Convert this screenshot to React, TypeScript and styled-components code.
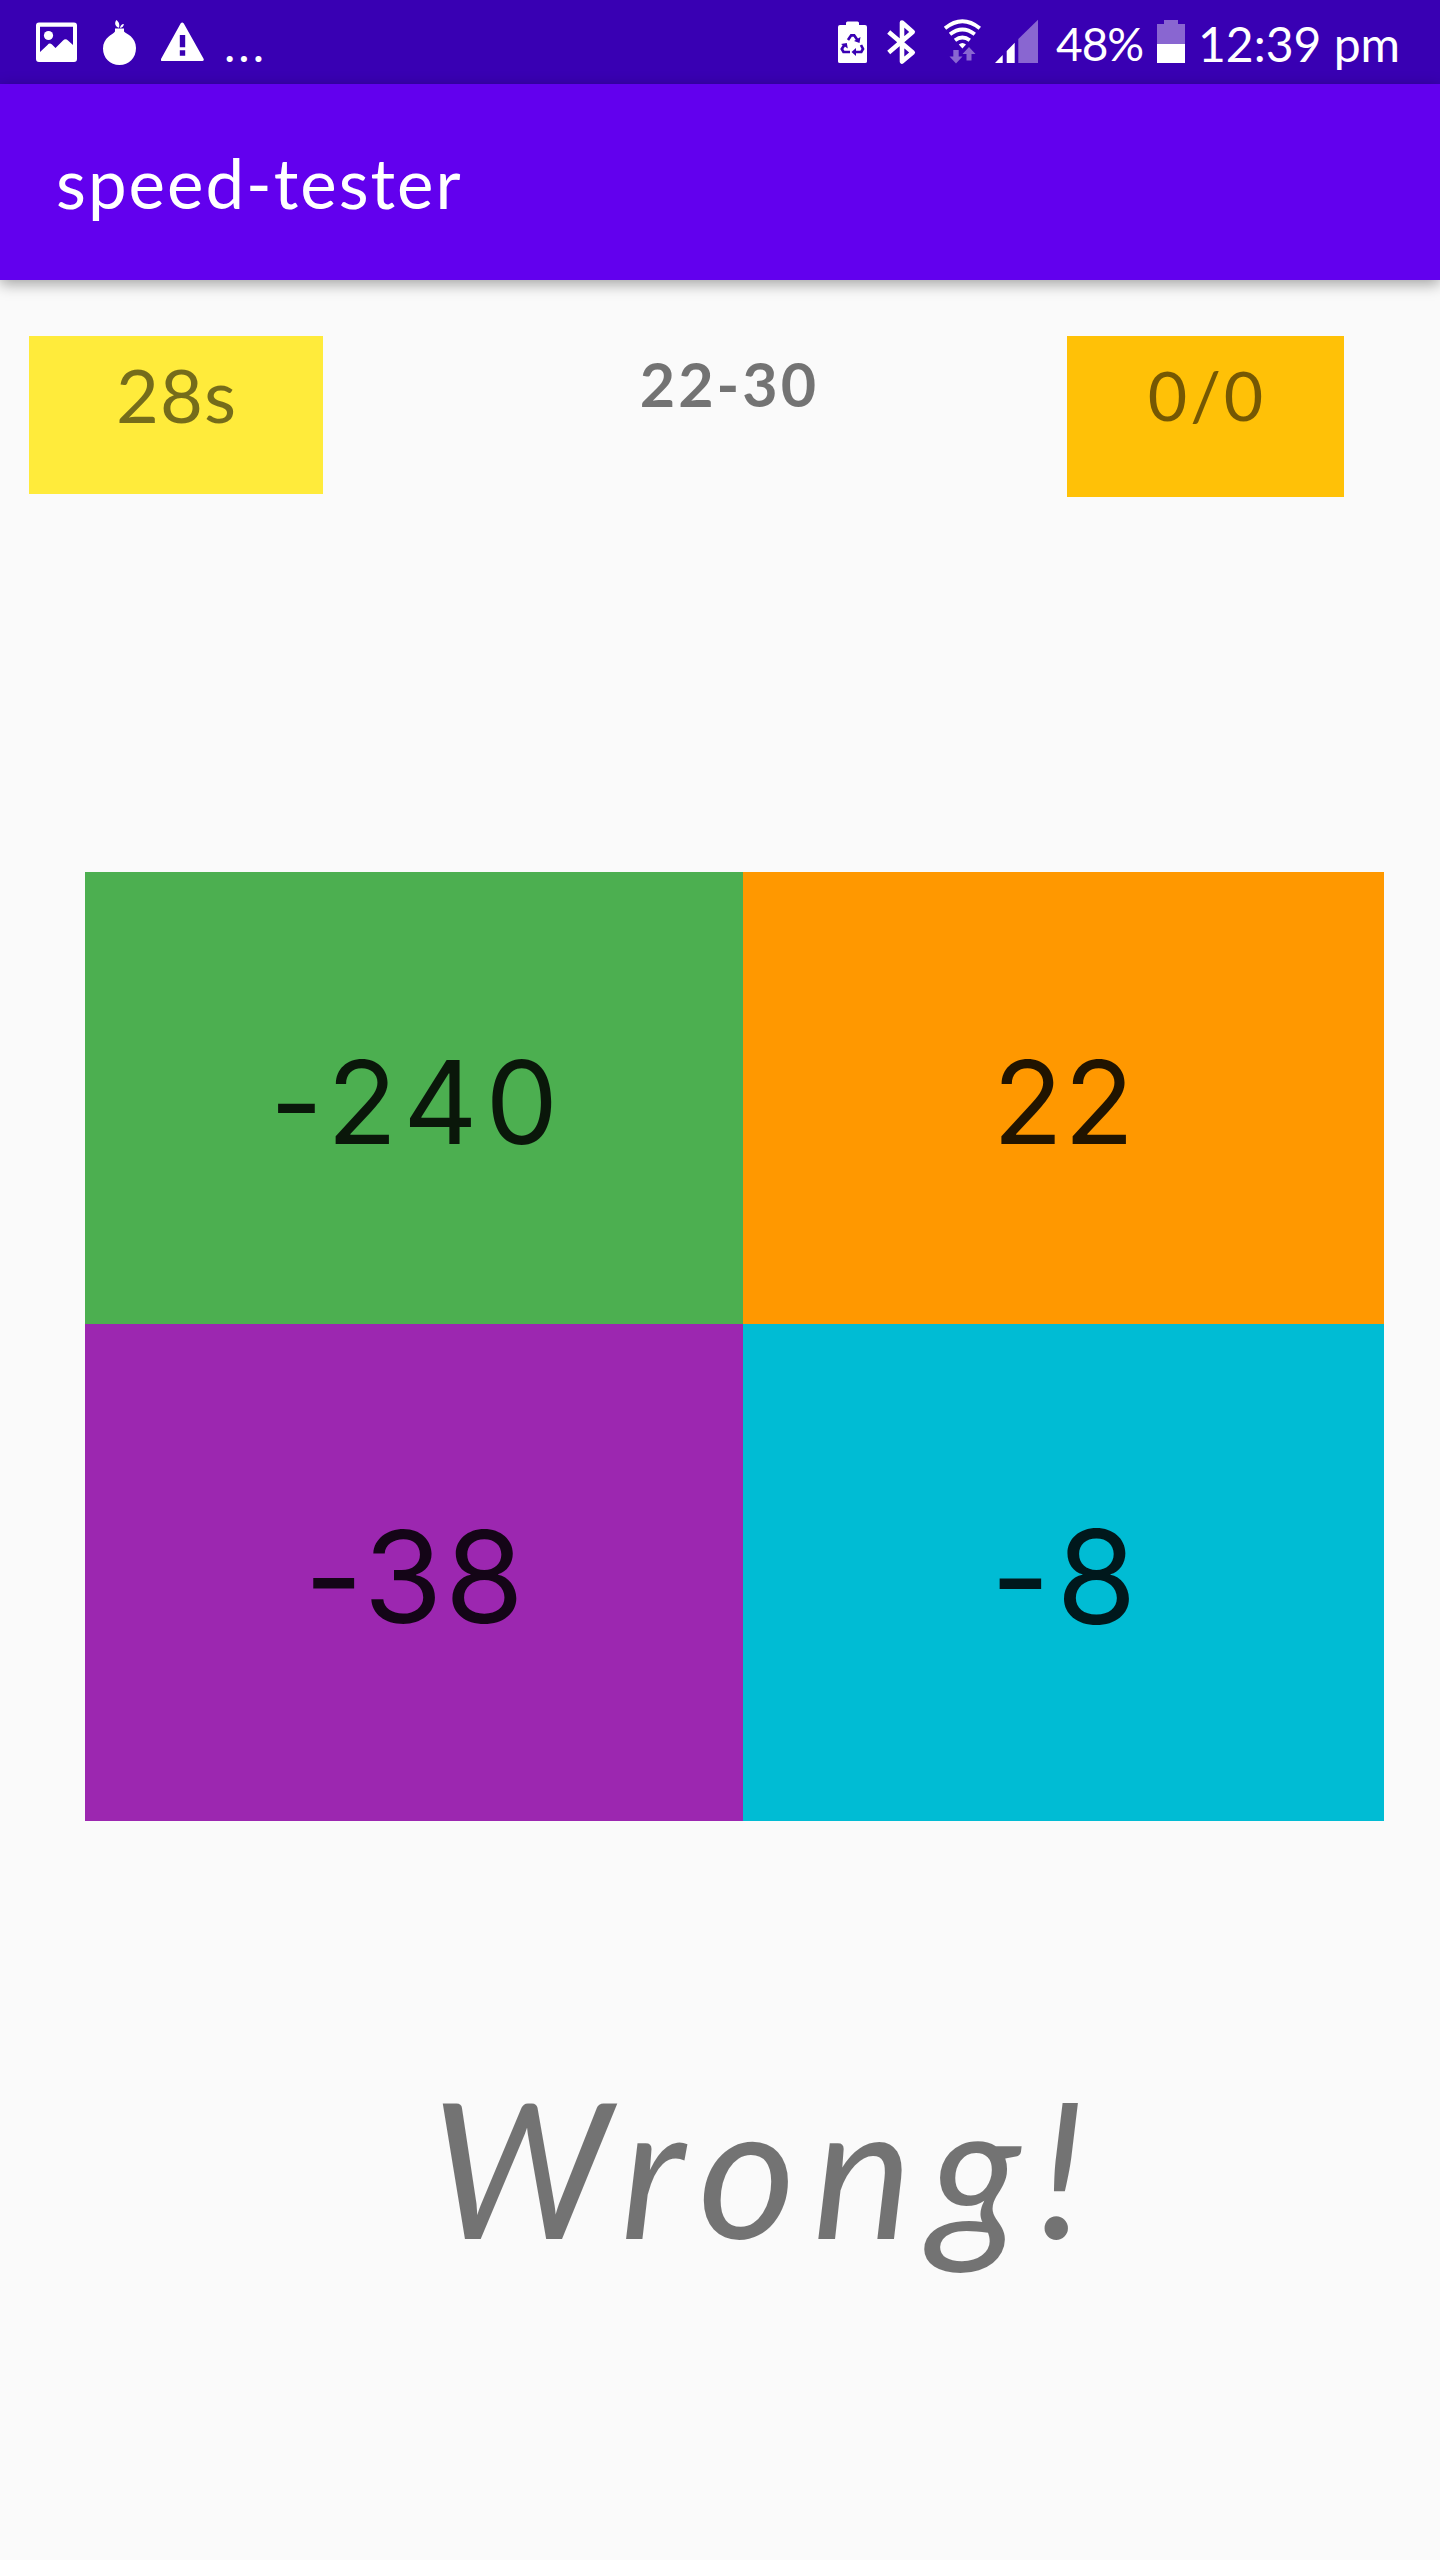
import React from "react";
import styled, { createGlobalStyle } from "styled-components";

const GlobalStyle = createGlobalStyle`
  * { box-sizing: border-box; }
  body { margin: 0; background: #fafafa; font-family: Lato, "Open Sans", sans-serif; }
`;

const Screen = styled.div`
  display: flex;
  flex-direction: column;
  width: 1440px;
  height: 2560px;
  background: #fafafa;
  overflow: hidden;
`;

const StatusBar = styled.header`
  display: flex;
  justify-content: space-between;
  height: 84px;
  padding: 0 0 0 36px;
  background: #3900b3;
  color: #fff;
`;

const StatusGroup = styled.div<{ $width: number }>`
  display: flex;
  width: ${(p) => p.$width}px;
`;

const Glyph = styled.svg<{ $gap?: number }>`
  display: block;
  flex: none;
  height: 84px;
  margin-left: ${(p) => p.$gap ?? 0}px;
`;

const StatusText = styled.span<{ $gap: number; $size: number; $spacing: number; $width: number }>`
  flex: none;
  width: ${(p) => p.$width}px;
  margin-left: ${(p) => p.$gap}px;
  font-size: ${(p) => p.$size}px;
  letter-spacing: ${(p) => p.$spacing}px;
  line-height: 88px;
  white-space: nowrap;
`;

const AppBar = styled.div`
  display: flex;
  align-items: center;
  height: 196px;
  flex: none;
  padding: 0 56px;
  background: #6200ee;
  box-shadow: 0 4px 14px rgba(0, 0, 0, 0.36);
  color: #fff;
`;

const Title = styled.h1`
  margin: 0;
  font-size: 69px;
  font-weight: 400;
  letter-spacing: 2px;
`;

const ScoreRow = styled.section`
  display: flex;
  align-items: flex-start;
  justify-content: space-between;
  height: 592px;
  flex: none;
  padding: 56px 96px 0 29px;
`;

const Counter = styled.div<{ $color: string; $width: number; $height: number; $size: number; $spacing: number }>`
  width: ${(p) => p.$width}px;
  height: ${(p) => p.$height}px;
  padding-left: ${(p) => p.$spacing}px;
  background: ${(p) => p.$color};
  color: rgba(0, 0, 0, 0.54);
  font-size: ${(p) => p.$size}px;
  line-height: 117px;
  letter-spacing: ${(p) => p.$spacing}px;
  text-align: center;
`;

const Question = styled.div`
  padding-left: 69px;
  color: rgba(0, 0, 0, 0.54);
  font-size: 61px;
  font-weight: 700;
  letter-spacing: 3px;
  line-height: 96px;
`;

const AnswerGrid = styled.main`
  display: grid;
  grid-template-columns: 658px 641px;
  grid-template-rows: 452px 497px;
  flex: none;
  margin-left: 85px;
`;

const Answer = styled.button<{ $color: string; $size: number; $spacing: number }>`
  display: flex;
  align-items: center;
  justify-content: center;
  border: 0;
  padding: 8px 0 0 ${(p) => p.$spacing}px;
  background: ${(p) => p.$color};
  color: rgba(0, 0, 0, 0.87);
  font-family: Inter, Lato, sans-serif;
  font-size: ${(p) => p.$size}px;
  letter-spacing: ${(p) => p.$spacing}px;
`;

const Verdict = styled.div`
  margin-top: 232px;
  padding-left: 93px;
  color: rgba(0, 0, 0, 0.54);
  font-size: 188px;
  font-style: italic;
  line-height: 226px;
  letter-spacing: 17px;
  text-align: center;
`;

function PictureIcon() {
  return (
    <Glyph width="41" viewBox="36 0 41 84" fill="#fff">
      <path fillRule="evenodd" d="M39 22.5h35a3 3 0 0 1 3 3V59a3 3 0 0 1-3 3H39a3 3 0 0 1-3-3V25.500a3 3 0 0 1 3-3ZM40 26.700V52l7.500-7Q49.500 42.500 52 44.500L55.500 48l7.500-7.500Q65.500 38 68 40.500L73 45V26.700Z" />
      <circle cx="48.500" cy="35.500" r="4.600" />
    </Glyph>
  );
}

function OnionIcon() {
  return (
    <Glyph $gap={26} width="33" viewBox="103 0 33 84" fill="#fff">
      <path d="M115 28.500h9v3c2 2.200 12 5.200 12 16.500 0 10-7 17-16.500 17S103 58 103 48.500c0-11 10-14 12-17Z" />
      <path d="M116.300 20c3 2 3.500 5 2.700 7.800-4-1.300-4.800-4.800-2.700-7.800ZM120 28c.3-2.400 1.500-3.800 3.900-4-.3 2.300-1.500 3.500-3.900 4Z" />
    </Glyph>
  );
}

function WarningIcon() {
  return (
    <Glyph $gap={25} width="43" viewBox="161 0 43 84" fill="#fff">
      <path fillRule="evenodd" d="M180.600 23.400q1.600-2 3.200 0L203.700 59q.4 2-1.500 2h-40q-1.800 0-1.200-2ZM179.800 35v12.200h5.400V35Zm0 15.300v5.500h5.400v-5.500Z" />
    </Glyph>
  );
}

function RecycleBatteryIcon() {
  return (
    <Glyph width="29" viewBox="838 0 29 84">
      <path fill="#fff" d="M846 25v-2q0-1.500 1.500-1.500h10q1.500 0 1.500 1.500v2h6q2 0 2 2v34.500q0 1.500-2 1.500h-25q-2 0-2-1.500V27q0-2 2-2Z" />
      <g fill="none" stroke="#3900b3" strokeWidth="2.700">
        <path d="m848 40 3.200-4.700h3l3.700 5.400M861 45l2 4-1.700 3H854M850 52h-6.500l-1.700-3 2.800-4.500" />
      </g>
      <path fill="#3900b3" d="m860.500 37-1 6-5.500-2ZM856 48v8l-4.500-4ZM841 44l5.800-1 1 5.600Z" />
    </Glyph>
  );
}

function BluetoothIcon() {
  return (
    <Glyph $gap={20} width="29" viewBox="887 0 29 84" fill="none" stroke="#fff" strokeWidth="4.600" strokeLinejoin="round">
      <path d="m888.700 32 24 20.500L902 61.500v-39l10.700 9.500-24 20.500" />
    </Glyph>
  );
}

function WifiIcon() {
  return (
    <Glyph $gap={27} width="39" viewBox="943 0 39 84">
      <g fill="none" stroke="#fff" strokeWidth="3.800">
        <path d="M945 28.300q17.400-14 34.800 0M950 34.300q12.400-9.500 24.800 0M955 40.300q7.400-5.600 14.800 0" />
      </g>
      <path fill="#fff" d="M958.800 44.500q3.600-3 7.200 0l-3.600 4Z" />
      <path fill="#8966d1" d="M953.300 50h5.400v6.500h3.800l-6.500 7-6.500-7h3.800ZM966.500 60.500V54h-4l6.500-7 6.500 7h-4v6.500Z" />
    </Glyph>
  );
}

function SignalIcon() {
  return (
    <Glyph $gap={13} width="43" viewBox="995 0 43 84">
      <path fill="#fff" d="M995 63l7.700-8v8ZM1006.700 51l8-8.300V63h-8Z" />
      <path fill="#8966d1" d="M1018.300 39 1038 19.700V63h-19.700Z" />
    </Glyph>
  );
}

function BatteryIcon() {
  return (
    <Glyph $gap={10} width="28" viewBox="1157 0 28 84">
      <path fill="#8966d1" d="M1157 24h7v-4h14v4h7v20h-28Z" />
      <path fill="#fff" d="M1157 44h28v19h-28Z" />
    </Glyph>
  );
}

const answers = [
  { label: "-240", color: "#4caf50", size: 115, spacing: 8 },
  { label: "22", color: "#ff9800", size: 115, spacing: 1 },
  { label: "-38", color: "#9c27b0", size: 128, spacing: 2 },
  { label: "-8", color: "#00bcd4", size: 130, spacing: 6 },
];

export default function App() {
  return (
    <Screen>
      <GlobalStyle />
      <StatusBar>
        <StatusGroup $width={300}>
          <PictureIcon />
          <OnionIcon />
          <WarningIcon />
          <StatusText $gap={20} $size={48} $spacing={3} $width={60}>...</StatusText>
        </StatusGroup>
        <StatusGroup $width={602}>
          <RecycleBatteryIcon />
          <BluetoothIcon />
          <WifiIcon />
          <SignalIcon />
          <StatusText $gap={18} $size={46} $spacing={-1} $width={91}>48%</StatusText>
          <BatteryIcon />
          <StatusText $gap={13} $size={48} $spacing={0} $width={210}>12:39 pm</StatusText>
        </StatusGroup>
      </StatusBar>
      <AppBar>
        <Title>speed-tester</Title>
      </AppBar>
      <ScoreRow>
        <Counter $color="#ffeb3b" $width={294} $height={158} $size={74} $spacing={1}>28s</Counter>
        <Question>22-30</Question>
        <Counter $color="#ffc107" $width={277} $height={161} $size={68} $spacing={3}>0/0</Counter>
      </ScoreRow>
      <AnswerGrid>
        {answers.map((a) => (
          <Answer key={a.label} $color={a.color} $size={a.size} $spacing={a.spacing}>{a.label}</Answer>
        ))}
      </AnswerGrid>
      <Verdict>Wrong!</Verdict>
    </Screen>
  );
}
